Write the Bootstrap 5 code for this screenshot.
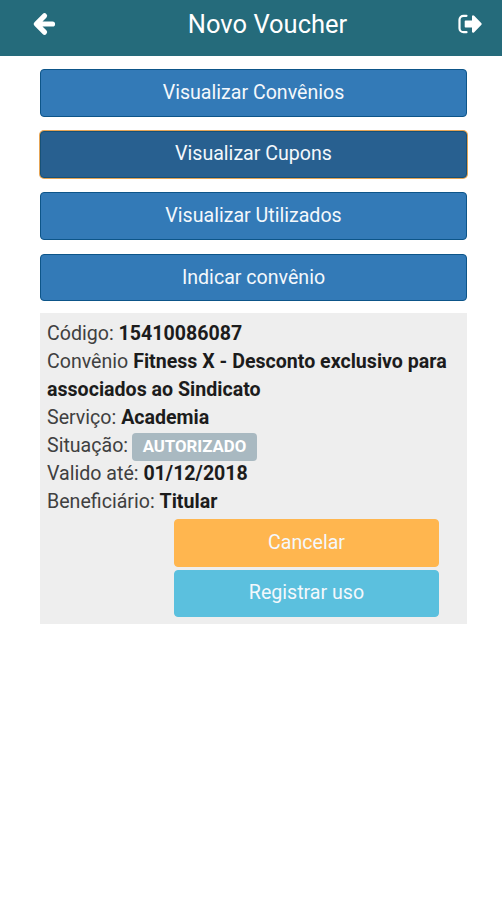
<!DOCTYPE html>
<html lang="pt-BR">
<head>
<meta charset="utf-8">
<meta name="viewport" content="width=device-width, initial-scale=1">
<title>Novo Voucher</title>
<link href="https://cdn.jsdelivr.net/npm/bootstrap@5.3.0/dist/css/bootstrap.min.css" rel="stylesheet">
<style>
body { font-family: Roboto, sans-serif; font-size: 19.6px; line-height: 28px; color: #222; background: #fff; }
.app-screen { width: 502px; }
.app-bar { height: 56px; background: #256b7b; padding: 0 20px 8px 32px; }
.app-bar h1 { font-size: 25.5px; line-height: 32px; padding-left: 22px; }
.app-content { padding: 13px 35px 0 40px; }
.voucher-actions { gap: 14px; }
.btn { height: 47.6px; padding: 0; font-size: 19.6px; line-height: 44px; border-radius: 4px; --bs-btn-color: #f4f8fc; }
.btn-menu { --bs-btn-bg: #337ab7; --bs-btn-border-color: #0d5589; --bs-btn-active-bg: #286090; --bs-btn-active-border-color: #165178; --bs-btn-active-color: #f4f8fc; }
.btn-menu.active { box-shadow: 0 0 0 1px #e5a455; }
.voucher-info { background: #eee; margin-top: 12px; height: 311px; padding: 7px 7px 0; }
.voucher-info p { color: #404040; }
.voucher-info strong { color: #1c1c1c; }
.status-tag { background: #a9b9c1; font-size: 16.8px; line-height: 26px; height: 28px; width: 125px; padding: 0; border-radius: 4px; vertical-align: top; margin: 1px 0 -1px -1px; }
.info-buttons { width: 265px; margin: 3px 0 0 127px; gap: 3px; }
.info-buttons .btn { height: 47.2px; line-height: 41.5px; }
.btn-cancel { --bs-btn-bg: #ffb64f; --bs-btn-border-color: #ffb64f; }
.btn-use { --bs-btn-bg: #5bc0de; --bs-btn-border-color: #5bc0de; }
</style>
<script src="https://cdn.jsdelivr.net/npm/bootstrap@5.3.0/dist/js/bootstrap.bundle.min.js"></script>
</head>
<body>
<div class="app-screen">
  <header class="app-bar d-flex align-items-center justify-content-between text-white">
    <a href="#" class="d-flex text-white" aria-label="Voltar">
      <svg width="24" height="24" viewBox="0 0 24 24" fill="none" stroke="currentColor" stroke-width="5.2" stroke-linecap="round" stroke-linejoin="round"><path d="M12.500 3.800 4.300 12l8.200 8.200M5 12h15.500"/></svg>
    </a>
    <h1 class="m-0 fw-normal">Novo Voucher</h1>
    <a href="#" class="d-flex text-white" aria-label="Sair">
      <svg width="25" height="24" viewBox="0 0 25 24"><path d="M9.500 3.800H6.500a4 4 0 0 0-4 4v8.400a4 4 0 0 0 4 4h3" fill="none" stroke="currentColor" stroke-width="2.200" stroke-linecap="round"/><path d="M8.500 8.500h6.500V4q.8-1.500 2.200-.2l7 7.100q1 1.100 0 2.200l-7 7.100q-1.400 1.300-2.200-.2V15.500H8.500q-.8 0-.8-.8V9.300q0-.8.8-.8z" fill="currentColor"/></svg>
    </a>
  </header>
  <main class="app-content">
    <div class="voucher-actions d-flex flex-column">
      <button type="button" class="btn btn-menu">Visualizar Convênios</button>
      <button type="button" class="btn btn-menu active">Visualizar Cupons</button>
      <button type="button" class="btn btn-menu">Visualizar Utilizados</button>
      <button type="button" class="btn btn-menu">Indicar convênio</button>
    </div>
    <section class="voucher-info">
      <p class="m-0">Código: <strong>15410086087</strong></p>
      <p class="m-0">Convênio <strong>Fitness X - Desconto exclusivo para associados ao Sindicato</strong></p>
      <p class="m-0">Serviço: <strong>Academia</strong></p>
      <p class="m-0">Situação: <span class="badge status-tag">AUTORIZADO</span></p>
      <p class="m-0">Valido até: <strong>01/12/2018</strong></p>
      <p class="m-0">Beneficiário: <strong>Titular</strong></p>
      <div class="info-buttons d-flex flex-column">
        <button type="button" class="btn btn-cancel">Cancelar</button>
        <button type="button" class="btn btn-use">Registrar uso</button>
      </div>
    </section>
  </main>
</div>
</body>
</html>
